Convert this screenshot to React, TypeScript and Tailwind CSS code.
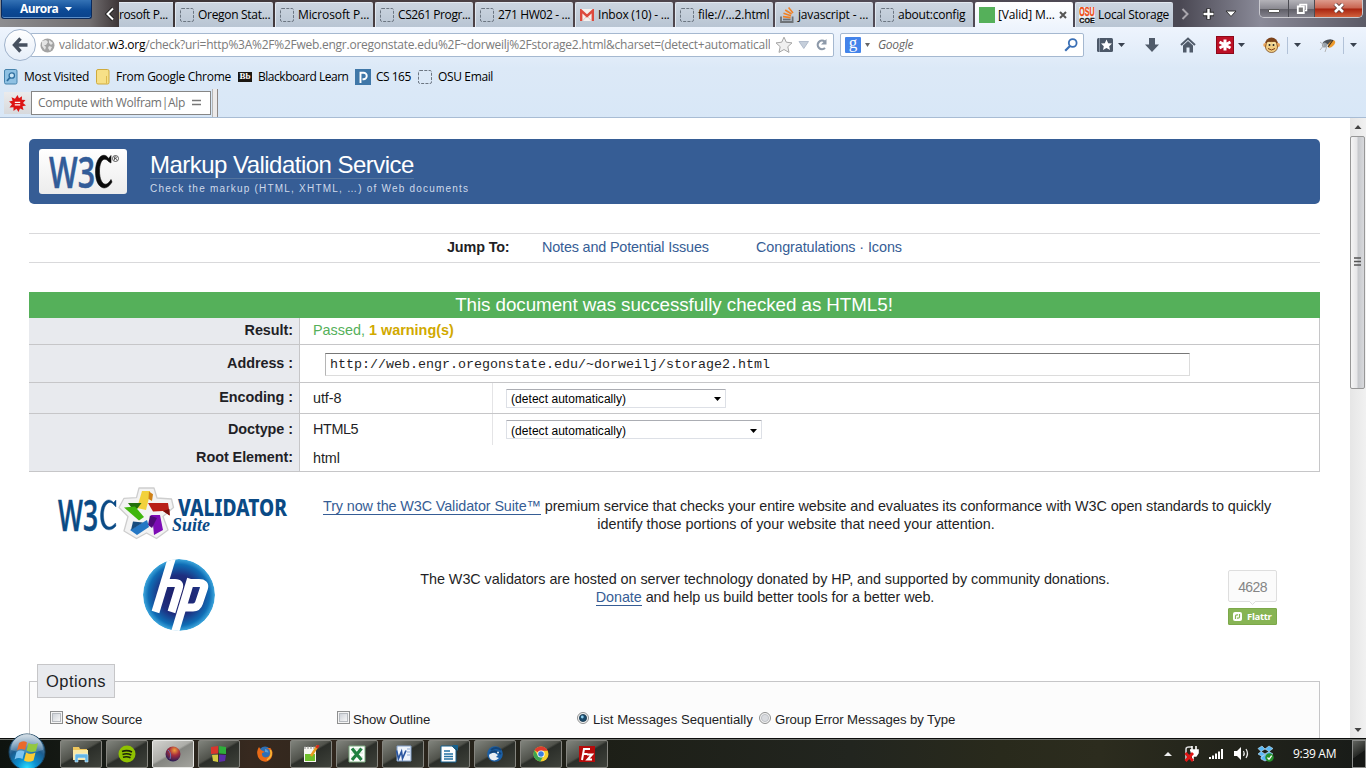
import React from "react";

type Kids = { children?: React.ReactNode };

const Dashed = () => (
  <svg width="14" height="14" viewBox="0 0 14 14" className="shrink-0">
    <rect x="0.5" y="0.5" width="13" height="13" rx="1.5" fill="none" stroke="#6c7682" strokeDasharray="3 1.3" />
  </svg>
);

const Gmail = () => (
  <svg width="14" height="12" viewBox="0 0 14 12" className="shrink-0">
    <rect width="14" height="12" rx="1" fill="#f4f0ee" />
    <path d="M1.2 12V1.6L7 7L12.8 1.6V12" fill="none" stroke="#dd4a3e" strokeWidth="2.4" />
    <path d="M2.5 12L6 8M11.5 12L8 8" stroke="#d9b8b4" strokeWidth=".7" />
  </svg>
);

const StackOverflow = () => (
  <svg width="14" height="16" viewBox="0 0 14 16" className="shrink-0">
    <path d="M1 9.5V15H12.6V9.5" fill="none" stroke="#6e7277" strokeWidth="1.8" />
    <path d="M3 12.5H10.6" stroke="#6e7277" strokeWidth="1.8" />
    <path d="M3 9.6L10.6 10.6M3.5 6.2L11 8.7M5.2 3L11.6 7M8.6 .6L13 6" stroke="#f08024" strokeWidth="1.6" />
  </svg>
);

const GreenSquare = () => <span className="h-4 w-4 shrink-0 bg-[#55b05a]" />;

const OsuCoe = () => (
  <svg width="16" height="16" viewBox="0 0 16 16" className="shrink-0">
    <rect width="16" height="16" fill="#e9eef4" />
    <text x="0.3" y="9.3" fontSize="12" fontWeight="700" fill="#f04a10" stroke="#f04a10" strokeWidth=".3" textLength="15.4" lengthAdjust="spacingAndGlyphs" fontFamily="Liberation Sans, sans-serif">OSU</text>
    <text x="0.3" y="15.8" fontSize="7.6" fontWeight="700" fill="#111" stroke="#111" strokeWidth=".3" textLength="15.4" lengthAdjust="spacingAndGlyphs" fontFamily="Liberation Sans, sans-serif">COE</text>
  </svg>
);

const Caret = ({ c = "#39424f", w = 7 }: { c?: string; w?: number }) => (
  <svg width={w} height="4" viewBox="0 0 8 4" preserveAspectRatio="none" className="shrink-0">
    <path d="M0 0H8L4 4Z" fill={c} />
  </svg>
);

const tabs: { icon: React.ReactNode; label: string; cls: string }[] = [
  { icon: <Dashed />, label: "Oregon Stat...", cls: "tracking-[-0.3px]" },
  { icon: <Dashed />, label: "Microsoft P...", cls: "tracking-[-0.1px]" },
  { icon: <Dashed />, label: "CS261 Progr...", cls: "tracking-[-0.42px]" },
  { icon: <Dashed />, label: "271 HW02 - ...", cls: "tracking-[-0.35px]" },
  { icon: <Gmail />, label: "Inbox (10) - ...", cls: "tracking-[-0.22px]" },
  { icon: <Dashed />, label: "file://...2.html", cls: "tracking-[-0.17px]" },
  { icon: <StackOverflow />, label: "javascript - ...", cls: "tracking-[-0.17px]" },
  { icon: <Dashed />, label: "about:config", cls: "tracking-[-0.22px]" },
];

const TabBar = () => (
  <div className="flex h-[27px] items-start bg-[linear-gradient(90deg,#8d8d90_0px,#716e70_90px,#3b3335_120px,#4c4145_500px,#514a55_900px,#4a4853_1180px,#8a8a98_1260px,#5b5a66_1366px)]">
    <div className="ml-px flex h-[19px] w-[91px] items-center rounded-b-[3px] border border-t-0 border-[#0a2a5c] bg-[linear-gradient(180deg,#3472b5,#0c4a96_55%,#0a428a)] pl-[18px] text-[12px] font-bold tracking-[-0.6px] text-white shadow-[inset_0_-1px_0_#5b8fca]">
      Aurora
      <span className="ml-[7px] flex"><Caret c="#fff" w={7} /></span>
    </div>
    <div className="flex h-[27px] w-[27px] shrink-0 items-center justify-center pl-2">
      <svg width="10" height="14" viewBox="0 0 10 14"><path d="M8 1.5L2.5 7L8 12.5" fill="none" stroke="#222" strokeWidth="4" /><path d="M8 1.5L2.5 7L8 12.5" fill="none" stroke="#fff" strokeWidth="2" /></svg>
    </div>
    <div className="mt-[2px] flex h-[25px] w-[54px] shrink-0 items-center border-t border-[#e2e8f0] bg-[linear-gradient(180deg,#ccd5e0,#b9c5d3)] text-[12px] tracking-[-0.4px] text-black">rosoft P...</div>
    {tabs.map((t) => (
      <div key={t.label} className="ml-[2px] mt-[2px] flex h-[25px] w-[98px] shrink-0 items-center gap-[4px] rounded-t-[2px] border-l border-t border-[#e2e8f0] bg-[linear-gradient(180deg,#ccd5e0,#b9c5d3)] pl-[4px] text-[12px] text-black">
        {t.icon}
        <span className={"whitespace-nowrap " + t.cls}>{t.label}</span>
      </div>
    ))}
    <div className="ml-[2px] mt-[2px] flex h-[25px] w-[98px] shrink-0 items-center rounded-t-[2px] bg-[linear-gradient(180deg,#ffffff,#eef4fd)] pl-[4px] text-[12px] text-black">
      <GreenSquare />
      <span className="ml-[3px] w-[61px] whitespace-nowrap tracking-[-0.15px]">[Valid] M...</span>
      <svg width="8" height="8" viewBox="0 0 8 8"><path d="M1 1L7 7M7 1L1 7" stroke="#555" strokeWidth="2" /></svg>
    </div>
    <div className="ml-[2px] mt-[2px] flex h-[25px] w-[98px] shrink-0 items-center gap-[3px] rounded-t-[2px] border-l border-t border-[#e2e8f0] bg-[linear-gradient(180deg,#ccd5e0,#b9c5d3)] pl-[3px] text-[12px] text-black">
      <OsuCoe />
      <span className="whitespace-nowrap tracking-[-0.3px]">Local Storage</span>
    </div>
    <svg width="72" height="27" viewBox="0 0 72 27" className="ml-[2px] shrink-0">
      <path d="M7.5 9L12.5 14L7.5 19" fill="none" stroke="#a9a6ad" strokeWidth="2" />
      <path d="M28 14H39M33.500 8.500V19.500" stroke="#222" strokeWidth="4.400" />
      <path d="M28.500 14H38.500M33.500 9V19" stroke="#fff" strokeWidth="2.400" />
      <path d="M51 11H61L56 16.500Z" fill="#fff" stroke="#333" />
    </svg>
    <div className="ml-[12px] flex h-[18px] w-[104px] shrink-0 overflow-hidden rounded-b-[5px] border border-t-0 border-[#c9c9cf]">
      <div className="flex w-[29px] items-center justify-center border-r border-[#4b4b52] bg-[linear-gradient(180deg,#b4b3b9,#8b8a92_50%,#5e5d66_52%,#83828c)]">
        <span className="mt-[4px] h-[4px] w-[12px] rounded-[1px] border border-[#555] bg-white" />
      </div>
      <div className="flex w-[26px] items-center justify-center border-r border-[#4b4b52] bg-[linear-gradient(180deg,#b4b3b9,#8b8a92_50%,#5e5d66_52%,#83828c)]">
        <svg width="12" height="12" viewBox="0 0 12 12"><path d="M4 3V1.500H10.500V7.500H9" fill="none" stroke="#fff" strokeWidth="1.500" /><path d="M1.800 3.500H7.800V10H1.800Z" fill="#777" stroke="#fff" strokeWidth="1.800" /></svg>
      </div>
      <div className="flex flex-1 items-center justify-center bg-[linear-gradient(180deg,#dd9b8c,#c8634f_48%,#a8230f_52%,#d0603c)]">
        <svg width="12" height="10" viewBox="0 0 12 10" className="-mt-[2px]"><path d="M2 1L10 9M10 1L2 9" stroke="#5a3330" strokeWidth="4.200" /><path d="M2 1L10 9M10 1L2 9" stroke="#fff" strokeWidth="2.600" /></svg>
      </div>
    </div>
  </div>
);

const NavBar = () => (
  <div className="flex h-[36px] items-center pl-[4px]">
    <div className="z-10 flex h-[32px] w-[32px] shrink-0 items-center justify-center rounded-full border border-[#9fb2cb] bg-[linear-gradient(180deg,#ffffff,#e6eef9)]">
      <svg width="16" height="16" viewBox="0 0 16 16"><path d="M8.500 1.500L2.500 8L8.500 14.500M2.500 8H15.500" fill="none" stroke="#46505f" strokeWidth="3.400" /></svg>
    </div>
    <div className="-ml-[6px] flex h-[24px] w-[804px] shrink-0 items-center rounded-[2px] border border-[#a5b8d0] bg-white pl-[9px]">
      <svg width="15" height="15" viewBox="0 0 15 15" className="shrink-0"><circle cx="7.500" cy="7.500" r="7" fill="#a3a3a3" /><path d="M2 3L6 2L8 4L6 7L4 7L6 9L5 12L2 8ZM9 2L13 5L11 7L9 5ZM9 8L12 9L10 13L8 10Z" fill="#e4e4e4" /></svg>
      <div className="ml-[4px] w-[712px] overflow-hidden whitespace-nowrap text-[12px] tracking-[-0.25px] text-[#7b7b7b]">
        validator.<span className="text-black">w3.org</span>/check?uri=http%3A%2F%2Fweb.engr.oregonstate.edu%2F~dorweilj%2Fstorage2.html&amp;charset=(detect+automatically)
      </div>
      <svg width="58" height="18" viewBox="0 0 58 18" className="ml-[5px] shrink-0">
        <path d="M9 1.200L11.300 6.200L17 6.900L12.800 10.700L14 16.400L9 13.500L4 16.400L5.200 10.700L1 6.900L6.700 6.200Z" fill="#f0f0f0" stroke="#a5a5a5" />
        <path d="M24 5.500H33.500L28.800 12.500Z" fill="#c6cfdb" stroke="#a7b3c4" strokeWidth=".8" />
        <path d="M49.800 5.600A4.300 4.300 0 1 0 50 12" fill="none" stroke="#8d99a9" strokeWidth="2.200" />
        <path d="M46 8.500L51.500 3V8.500Z" fill="#8d99a9" />
      </svg>
    </div>
    <div className="ml-[6px] flex h-[24px] w-[244px] shrink-0 items-center rounded-[2px] border border-[#a5b8d0] bg-white pl-[4px]">
      <span className="flex h-4 w-4 items-center justify-center rounded-[1px] bg-[#4484ea] font-['Liberation_Serif',serif] text-[17px] leading-none text-white"><span className="-mt-[5px]">g</span></span>
      <span className="ml-[4px]"><Caret c="#666" w={5} /></span>
      <span className="ml-[8px] flex-1 text-[12px] italic tracking-[-0.3px] text-[#666]">Google</span>
      <svg width="14" height="14" viewBox="0 0 14 14" className="mr-[5px]"><circle cx="8.700" cy="5" r="3.900" fill="none" stroke="#3a6fb5" strokeWidth="1.800" /><path d="M6 8L1.200 12.800" stroke="#3a6fb5" strokeWidth="2.200" /></svg>
    </div>
    <svg width="282" height="24" viewBox="0 0 282 24" className="shrink-0">
      <rect x="13" y="5" width="16" height="14" rx="1.500" fill="#4c5868" />
      <path d="M15.500 5V19" stroke="#8793a3" />
      <path d="M22.500 6.500L24.200 10.200L28 10.600L25.200 13.200L26 17L22.500 15L19 17L19.800 13.200L17 10.600L20.800 10.200Z" fill="#fff" />
      <path d="M34 10H41L37.500 14Z" fill="#39424f" />
      <path d="M65 5H71V11.500H75L68 19L61 11.500H65Z" fill="#505b6a" />
      <path d="M97 12L104 5.500L111 12" fill="none" stroke="#505b6a" strokeWidth="2" />
      <path d="M99 12.500L104 8L109 12.500V19.500H105.500V14.500H102.500V19.500H99Z" fill="#505b6a" />
      <rect x="132.500" y="3.500" width="17" height="17" fill="#bd1026" stroke="#8e0818" />
      <path d="M141 6.500V17.500M135.500 9L146.500 15M146.500 9L135.500 15" stroke="#fff" strokeWidth="3" />
      <path d="M154 10H161L157.500 14Z" fill="#39424f" />
      <ellipse cx="187.500" cy="11.500" rx="6.500" ry="7" fill="#7c431a" />
      <circle cx="181.200" cy="12" r="2" fill="#e9a45c" /><circle cx="194" cy="12" r="2" fill="#e9a45c" />
      <ellipse cx="187.500" cy="14" rx="6" ry="5.500" fill="#f1cd83" stroke="#6b3a12" strokeWidth=".7" />
      <circle cx="185" cy="11" r="2.300" fill="#f8e0a0" /><circle cx="190" cy="11" r="2.300" fill="#f8e0a0" />
      <circle cx="185.500" cy="12" r="1" fill="#222" /><circle cx="189.500" cy="12" r="1" fill="#222" />
      <path d="M184 15.500Q187.500 18.500 191 15.500" fill="none" stroke="#7d3a12" />
      <path d="M203.500 4V21M259.500 4V21" stroke="#b2c2d8" />
      <path d="M210 10H217L213.500 14ZM266 10H273L269.500 14Z" fill="#39424f" />
      <ellipse cx="244" cy="9" rx="5.500" ry="2.300" transform="rotate(-15 244 9)" fill="#4a4f55" />
      <ellipse cx="247.500" cy="11" rx="4.500" ry="2.400" transform="rotate(-45 247.500 11)" fill="#ec9a2c" />
      <path d="M244 14L249 7" stroke="#3b332a" strokeWidth="1.200" />
      <circle cx="240.500" cy="12" r="2.600" fill="#96a0aa" />
      <path d="M236 9L240 12L236 17M243 13L241 19" fill="none" stroke="#b5b5b5" />
    </svg>
  </div>
);

const Bookmarks = () => (
  <div className="flex h-[27px] items-center pl-[4px] text-[12px] text-black">
    <svg width="14" height="16" viewBox="0 0 14 16" className="shrink-0"><rect x=".5" y=".5" width="12.500" height="14.500" rx="1.500" fill="#8fc1e3" stroke="#4683ad" /><circle cx="7.800" cy="6.500" r="2.700" fill="#c9e5f6" stroke="#2d6d9e" strokeWidth="1.300" /><path d="M5.700 8.700L3 12" stroke="#2d6d9e" strokeWidth="1.800" /></svg>
    <span className="ml-[6px] w-[72px] whitespace-nowrap tracking-[-0.28px]">Most Visited</span>
    <svg width="14" height="16" viewBox="0 0 14 16" className="shrink-0"><rect x=".5" y=".5" width="12.500" height="14.500" rx="1.500" fill="#f7e087" stroke="#cfaa3c" /><path d="M10.500 7V14.500" stroke="#dcb94e" /></svg>
    <span className="ml-[6px] w-[122px] whitespace-nowrap tracking-[-0.28px]">From Google Chrome</span>
    <span className="flex h-[10px] w-[14px] shrink-0 items-center justify-center bg-[#1b1712] font-['Liberation_Serif',serif] text-[9px] font-bold leading-none text-white">Bb</span>
    <span className="ml-[6px] w-[97px] whitespace-nowrap tracking-[-0.47px]">Blackboard Learn</span>
    <svg width="16" height="16" viewBox="0 0 16 16" className="shrink-0"><rect width="16" height="16" fill="#3f77a8" /><path d="M5.500 14V3.800H8.500A3.200 3.200 0 0 1 8.500 10.300H7.500" fill="none" stroke="#fff" strokeWidth="1.900" /></svg>
    <span className="ml-[5px] w-[42px] whitespace-nowrap tracking-[-0.5px]">CS 165</span>
    <Dashed />
    <span className="ml-[6px] whitespace-nowrap tracking-[-0.36px]">OSU Email</span>
  </div>
);

const WolframBar = () => (
  <div className="flex h-[28px] border-b border-[#a8bcd4] pl-[4px]">
    <div className="mt-[2px] flex h-[22px] w-[27px] items-center justify-center bg-[linear-gradient(180deg,#ebebec,#d7d9dc)]">
      <svg width="17" height="17" viewBox="0 0 17 17"><path d="M8.500 0L10 3.200L13 1.200L12.800 4.800L16.500 5L14 8L17 10.500L13.500 11.300L14.500 15L11 13.500L9.500 17L7.500 13.700L4.500 16L4.500 12.300L.5 12.500L3 9.200L0 6.500L3.600 5.800L2.500 2.200L6 3.700Z" fill="#dd1414" /><path d="M5.800 7.300H11.200M5.800 9.800H11.200" stroke="#fff" strokeWidth="1.200" /></svg>
    </div>
    <div className="mt-px flex h-[24px] w-[180px] items-center border border-[#868686] bg-white pl-[6px] text-[12px] text-[#717171]">
      <span className="w-[154px] shrink-0 whitespace-nowrap tracking-[-0.31px]">Compute with Wolfram|Alp</span>
      <svg width="9" height="7" viewBox="0 0 9 7" className="-mt-[2px] shrink-0"><path d="M0 1.500H9M0 5.500H9" stroke="#777" strokeWidth="1.600" /></svg>
    </div>
    <div className="-mt-px ml-px h-[28px] w-[6px] border-l border-r border-[#8d8786] border-l-[#b5b5b5] bg-[#eceaea]" />
  </div>
);

const W3CHeader = () => (
  <div className="flex h-[65px] rounded-[5px] bg-[#365d95]">
    <div className="ml-[10px] mt-[10px] h-[45px] w-[88px] rounded-[3px] bg-[linear-gradient(180deg,#fff,#ececec)]">
      <svg width="88" height="45" viewBox="0 0 88 45">
        <text x="10" y="38.500" fontFamily="Open Sans, sans-serif" fontSize="44" fontWeight="600" fill="#325c98" stroke="#325c98" strokeWidth=".5" textLength="46" lengthAdjust="spacingAndGlyphs">W3</text>
        <path d="M72 6.500V14L69.500 12.500C65 7 60.500 12 60.500 22C60.500 34 66.500 40 72 30.500L73 33C66.500 44 56.500 39 56.500 23C56.500 8 65 2 69.500 9.500Z" fill="#0a0a0a" stroke="#0a0a0a" strokeWidth=".6" />
        <circle cx="76.500" cy="9.500" r="3" fill="none" stroke="#333" strokeWidth=".8" />
        <path d="M75.500 11.200V7.900H77Q78 8.700 77 9.500H75.500M76.800 9.500L77.800 11.200" fill="none" stroke="#333" strokeWidth=".7" />
      </svg>
    </div>
    <div className="ml-[23px] flex flex-col items-start">
      <div className="mt-[12px] h-[28px] whitespace-nowrap border-b border-[#53749f] text-[24px] leading-[28px] tracking-[-0.53px] text-white">Markup Validation Service</div>
      <div className="mt-[3px] whitespace-nowrap text-[10px] leading-[13px] tracking-[1.21px] text-[#cfdaea]">Check the markup (HTML, XHTML, …) of Web documents</div>
    </div>
  </div>
);

const Row = ({ label, h, children }: Kids & { label: string; h: string }) => (
  <div className={"flex " + h}>
    <div className="flex w-[271px] shrink-0 items-center justify-end border-r border-[#c6c6c8] bg-[#e8eaee] pr-[6px] font-bold tracking-[-0.05px]">{label}</div>
    <div className="flex flex-1 items-center">{children}</div>
  </div>
);

const Select = ({ w }: { w: string }) => (
  <div className={"ml-[13px] flex h-[19px] items-center justify-between rounded-[1px] border border-[#dde0e6] border-t-[#abadb3] bg-white pl-[4px] pr-[4px] pt-[2px] text-black " + w}>
    <span className="text-[12px] tracking-[0.05px]">(detect automatically)</span>
    <Caret c="#000" w={7} />
  </div>
);

const Results = () => (
  <div className="mt-[29px] border-b border-r border-[#c6c6c8] text-[14.4px]">
    <div className="-mr-px flex h-[26px] items-center justify-center bg-[#55b05a] pr-px text-[18.8px] text-white"><span className="whitespace-nowrap tracking-[-0.06px]">This document was successfully checked as HTML5!</span></div>
    <Row label="Result:" h="h-[27px] border-b border-[#c6c6c8] pb-0">
      <span className="ml-[13px] text-[#55b05a]">Passed, <b className="text-[#d1a900]">1 warning(s)</b></span>
    </Row>
    <Row label="Address :" h="h-[38px] border-b border-[#c6c6c8]">
      <div className="ml-[25px] mt-px flex h-[23px] w-[865px] items-center border border-[#dcdcdc] border-l-[#b5b5b5] border-t-[#777] pl-[4px] pt-[2px] font-['Liberation_Mono',monospace] text-[13.33px]">http://web.engr.oregonstate.edu/~dorweilj/storage2.html</div>
    </Row>
    <Row label="Encoding :" h="h-[31px] border-b border-[#c6c6c8]">
      <span className="flex h-full w-[193px] items-center border-r border-[#e4e4e6] pl-[13px] pt-px tracking-[-0.1px]">utf-8</span>
      <Select w="w-[220px]" />
    </Row>
    <Row label="Doctype :" h="h-[31px]">
      <span className="flex h-full w-[193px] items-center border-r border-[#e4e4e6] pl-[13px] tracking-[-0.4px]">HTML5</span>
      <Select w="w-[256px]" />
    </Row>
    <Row label="Root Element:" h="h-[26px]"><span className="ml-[13px] mt-px tracking-[-0.1px]">html</span></Row>
  </div>
);

const SuiteLogo = () => (
  <svg width="232" height="54" viewBox="0 0 232 54" className="shrink-0">
    <text x="1" y="43.500" fontFamily="Open Sans, sans-serif" fontSize="43" fontWeight="600" fill="#0a4a85" stroke="#0a4a85" strokeWidth=".5" textLength="40" lengthAdjust="spacingAndGlyphs">W3</text>
    <path d="M59 13V20L57 18C53 12 46.500 17 46.500 28C46.500 39 52 44 58.500 36L59 39C52 47 43.500 42 43.500 29C43.500 15 51 9 56.500 15.500Z" fill="#0a4a85" stroke="#0a4a85" strokeWidth=".4" />
    <path d="M82 1H97L100 11L114.500 12L116.500 20.500L106 29.500L111 43L99.500 51.500L89.500 46L79.500 51.500L67 44L71 29.500L62 20.500L67 11.300L79.500 10.700Z" fill="#f3f3f3" stroke="#cecece" strokeWidth="1.300" strokeLinejoin="round" />
    <path d="M85 4H93L92 11L89 23L80 21Z" fill="#f2d13c" /><path d="M92 4.500L96 7.300L95 14L91.500 12Z" fill="#cf8117" />
    <path d="M91 16H111L113 28.500L106 24L96 24.500Z" fill="#b91f18" /><path d="M106 24L112.500 22V28.500Z" fill="#7a100c" />
    <path d="M94 28H103L106 43L97 48L96 38Z" fill="#7d0cb5" /><path d="M93 28.500L100 31L95 41L91 38Z" fill="#4d0a78" />
    <path d="M73 43L90 33L92 40L80 48Z" fill="#2477c4" /><path d="M76 34.500L86 35.500L74 43Z" fill="#164b7e" />
    <path d="M71 16H84.500L80 22L74 20Z" fill="#236f0b" /><path d="M67 20.500L78 19.500L87 30L82 33.500Z" fill="#3fb60c" />
    <text x="121" y="29" fontFamily="Noto Sans, sans-serif" fontSize="23" fontWeight="800" fill="#0a4a85" textLength="109" lengthAdjust="spacingAndGlyphs">VALIDATOR</text>
    <text x="115" y="44" fontFamily="Liberation Serif, serif" fontSize="18" fontWeight="700" fontStyle="italic" fill="#0a4a85" textLength="38" lengthAdjust="spacingAndGlyphs">Suite</text>
  </svg>
);

const HpLogo = () => (
  <svg width="72" height="72" viewBox="0 0 72 72" className="shrink-0">
    <defs>
      <radialGradient id="hp" cx="50%" cy="50%" r="50%"><stop offset="0" stopColor="#1d1c63" /><stop offset=".55" stopColor="#1e2f80" /><stop offset=".85" stopColor="#0f6db5" /><stop offset="1" stopColor="#3fa9de" /></radialGradient>
      <clipPath id="hpc"><circle cx="36" cy="36" r="36" /></clipPath>
    </defs>
    <g clipPath="url(#hpc)">
      <circle cx="36" cy="36" r="36" fill="url(#hp)" />
      <g fill="none" stroke="#fff" strokeWidth="8">
        <path d="M29.500 -3L12.500 53" />
        <path d="M22 24H32Q37.500 24 35.800 29L28.500 53" />
        <path d="M48 20L31.500 75" />
        <path d="M46 24H56Q62.500 24 61 29L56 44Q54.500 48.500 50 48.500H38" />
      </g>
    </g>
  </svg>
);

const Sponsors = () => (
  <div className="text-[14.4px] leading-[18px]">
    <div className="flex pl-[28px] pt-[15px]">
      <SuiteLogo />
      <div className="ml-[30px] mt-[10px] w-[956px] text-center">
        <div className="whitespace-nowrap tracking-[-0.115px]"><span className="border-b border-[#365d95] text-[#365d95]">Try now the W3C Validator Suite™</span> premium service that checks your entire website and evaluates its conformance with W3C open standards to quickly</div>
        <div className="pr-[2px] tracking-[-0.04px]">identify those portions of your website that need your attention.</div>
      </div>
    </div>
    <div className="mt-[18px] flex pl-[114px]">
      <HpLogo />
      <div className="ml-[142px] mt-[11px] w-[816px] text-center tracking-[-0.07px]">
        <div>The W3C validators are hosted on server technology donated by HP, and supported by community donations.</div>
        <div><span className="border-b border-[#365d95] text-[#365d95]">Donate</span> and help us build better tools for a better web.</div>
      </div>
      <div className="ml-[55px] mt-[11px] w-[49px]">
        <div className="flex h-[32px] items-center justify-center rounded-[2px] border border-[#dedede] bg-[#fbfbfb] pt-px text-[14px] tracking-[-0.6px] text-[#858585]">4628</div>
        <svg width="49" height="6" viewBox="0 0 49 6" className="-mt-px block"><path d="M21 0L24.500 3.500L28 0" fill="#fbfbfb" stroke="#dedede" /></svg>
        <div className="mt-px flex h-[17px] items-center rounded-[1px] border border-[#7ca84a] bg-[#87b454] pl-[4px] font-['Open_Sans',sans-serif] text-[9.5px] font-bold text-white">
          <svg width="9" height="9" viewBox="0 0 9 9"><rect width="9" height="9" rx="2" fill="#fff" /><path d="M2.500 7V4Q2.500 2.800 4 2.800H5M4 6.200H5Q6.500 6.200 6.500 5V2" fill="none" stroke="#87b454" strokeWidth="1.200" /></svg>
          <span className="ml-[5px] tracking-[-0.3px]">Flattr</span>
        </div>
      </div>
    </div>
  </div>
);

const Check = () => <span className="mt-px flex h-[13px] w-[13px] shrink-0 items-center justify-center border border-[#8e8f8f] bg-[#f4f4f4]"><span className="h-[9px] w-[9px] border border-[#b6babf] bg-[linear-gradient(135deg,#cfd3d9,#f6f6f6)]" /></span>;

const Radio = ({ on }: { on?: boolean }) => (
  <svg width="12" height="12" viewBox="0 0 12 12" className="mt-[2px] shrink-0"><circle cx="6" cy="6" r="5.500" fill="#f4f4f4" stroke="#8e8f8f" /><circle cx="6" cy="6" r="3.600" fill={on ? "#1b4a6b" : "#d9dbdf"} stroke={on ? "#16384f" : "#b6babf"} strokeWidth=".8" />{on && <circle cx="5.300" cy="5" r="1.400" fill="#8fd0ef" />}</svg>
);

const Options = () => (
  <div className="mt-[33px] flex h-[80px] flex-col">
    <div className="flex h-[34px] shrink-0 items-end">
      <div className="h-[17px] w-[8px] border-l border-t border-[#c6c6c8] bg-[#fcfcfc]" />
      <div className="flex h-[34px] w-[78px] items-center justify-center border border-[#c6c6c8] bg-[#e8eaee] text-[16.5px] tracking-[0.45px]">Options</div>
      <div className="h-[17px] flex-1 border-r border-t border-[#c6c6c8] bg-[#fcfcfc]" />
    </div>
    <div className="flex h-[46px] shrink-0 items-start border-l border-r border-[#c6c6c8] bg-[#fcfcfc] pl-[20px] pt-[12px] text-[13.2px] leading-[20px]">
      <div className="flex w-[287px] gap-[2px] tracking-[-0.1px]"><Check /><span>Show Source</span></div>
      <div className="flex w-[240px] gap-[3px] tracking-[-0.1px]"><Check /><span>Show Outline</span></div>
      <Radio on />
      <span className="ml-[4px] w-[166px] whitespace-nowrap">List Messages Sequentially</span>
      <span className="mr-[3px] w-[13px]"><Radio /></span>
      <span className="whitespace-nowrap tracking-[-0.1px]">Group Error Messages by Type</span>
    </div>
  </div>
);

const Scrollbar = () => (
  <div className="flex w-[16px] shrink-0 flex-col items-center bg-[linear-gradient(90deg,#e6e6e6,#f1f1f1)]">
    <svg width="16" height="18" viewBox="0 0 16 18"><path d="M4.500 11L8 7L11.500 11Z" fill="#444" /></svg>
    <div className="mr-px flex h-[253px] w-[15px] items-center justify-center rounded-[2px] border border-[#979797] bg-[linear-gradient(90deg,#f5f5f5,#e6e6e8_45%,#c6c8cc_55%,#d8d9dc)]">
      <svg width="7" height="9" viewBox="0 0 7 9" className="-mt-[2px]"><path d="M0 1H7M0 4.500H7M0 8H7" stroke="#555" strokeWidth="1.300" /></svg>
    </div>
    <div className="flex-1" />
    <svg width="16" height="17" viewBox="0 0 16 17"><path d="M4.500 7L8 11L11.500 7Z" fill="#444" /></svg>
  </div>
);

const I = ({ children }: Kids) => <svg width="18" height="18" viewBox="0 0 18 18">{children}</svg>;

const apps: { k: string; bg: string; icon: React.ReactNode }[] = [
  { k: "explorer", bg: "n", icon: <I><path d="M1 2H7L8 4H15V15H1Z" fill="#eec65c" /><path d="M1 5H16V15H1Z" fill="#fae9a4" /><path d="M3 17V10Q3 9 4.500 9H14.500Q16 9 16 10V17H13V13H6V17Z" fill="#63b6e6" stroke="#d8f0fc" strokeWidth=".6" /></I> },
  { k: "spotify", bg: "n", icon: <I><circle cx="9" cy="9" r="8.500" fill="#8fc200" /><path d="M4 6.500Q9 4.500 14 7M4.500 9.500Q9 7.800 13.300 10M5 12.300Q9 11 12.500 12.800" fill="none" stroke="#1b2408" strokeWidth="1.600" /></I> },
  { k: "aurora", bg: "a", icon: <I><defs><radialGradient id="au" cx="60%" cy="25%" r="75%"><stop offset="0" stopColor="#f2a13a" /><stop offset=".45" stopColor="#a72d3c" /><stop offset="1" stopColor="#271c56" /></radialGradient></defs><circle cx="9" cy="9" r="7.500" fill="url(#au)" /><path d="M4 5Q8 8 6 14" fill="none" stroke="#6174b8" /></I> },
  { k: "squares", bg: "n", icon: <I><path d="M1 2L8 1V8.500L1 9Z" fill="#d8362d" /><path d="M9 1L16 2V9L9 8.500Z" fill="#2fae3b" /><path d="M2 10L8 9.500V17L3 16Z" fill="#d3ca41" /><path d="M9 9.500L16 10L15 16L9 17Z" fill="#5b2da8" /></I> },
  { k: "firefox", bg: "x", icon: <I><circle cx="9" cy="8" r="6.500" fill="#2d6fb6" /><path d="M9 3Q14 3 14 8Q14 12 9.500 12.500Q5.500 12 6 8L9 7L5 5L3 2Q0 6 2 12Q5 17.500 11 16.500Q17 14 16.500 7Q14 2 14 3Q13 3 9 3Z" fill="#e96a17" /><path d="M9 4Q12 4.500 12.500 7.500L9 7Z" fill="#5ba0d8" /><path d="M14.500 5Q17 11 11 15" fill="none" stroke="#f7bb38" strokeWidth="1.500" /></I> },
  { k: "notepad", bg: "n", icon: <I><rect x="2" y="2" width="12" height="15" fill="#f6f6f0" /><path d="M3 9H13V16H3Z" fill="#6fbf2d" /><path d="M3 1V4M6 1V4M9 1V4M12 1V4" stroke="#888" /><path d="M15.500 1L9 11" stroke="#e79b1f" strokeWidth="2.500" /><path d="M16.500 0L14.500 3" stroke="#d42a20" strokeWidth="2.500" /></I> },
  { k: "excel", bg: "n", icon: <I><path d="M1 1H17V17H1Z" fill="#fff" stroke="#7cac80" /><path d="M3 4H15M3 8H15M3 12H15" stroke="#cfe5d1" /><path d="M4 3.500L13.500 15M13.500 3.500L4 15" stroke="#218141" strokeWidth="3.200" /></I> },
  { k: "word", bg: "n", icon: <I><path d="M3 1H17V16H3Z" fill="#eef4fc" stroke="#82a1cc" /><path d="M13 4H16M13 7H16M13 10H16" stroke="#8aa8d5" /><path d="M2.500 5.500L4.500 13.500L7.500 6.500L8.500 13.500L12 5.500" fill="none" stroke="#2a559f" strokeWidth="1.700" /></I> },
  { k: "writer", bg: "n", icon: <I><path d="M1 1H12L16 5V17H1Z" fill="#fff" stroke="#15618f" /><path d="M12 0H18V6Z" fill="#15618f" /><path d="M4 6H10M4 9H13M4 11.500H13M4 14H13" stroke="#2573a4" strokeWidth="1.300" /></I> },
  { k: "thunderbird", bg: "n", icon: <I><circle cx="9" cy="9" r="7.800" fill="#1b5fa6" /><path d="M3 10Q5 7 9 8L12 10L10 12L13 13Q10 16.500 6 15Q3 13.500 3 10Z" fill="#e9eef4" /><path d="M4 8Q9 4 15 9M5 5Q10 1 15 5" fill="none" stroke="#134376" strokeWidth="2" /><circle cx="12" cy="7.500" r="1" fill="#e4edf5" /></I> },
  { k: "chrome", bg: "n", icon: <I><circle cx="9" cy="9" r="7.500" fill="#f7cf2e" /><path d="M9 9L2.500 5.200A7.500 7.500 0 0 1 15.800 5.800L9 5.800Z" fill="#de3b2e" /><path d="M2.500 5.200A7.500 7.500 0 0 0 8.400 16.500L11.500 10.500L6 10.800Z" fill="#3ea551" /><circle cx="9" cy="9" r="3.600" fill="#fff" /><circle cx="9" cy="9" r="2.800" fill="#3b7ee0" /></I> },
  { k: "filezilla", bg: "n", icon: <I><rect x="1" y="1" width="16" height="16" fill="#b60b0b" /><path d="M4 15L6 4H12M5 9H9.500M9 9.500H14L9.500 14.500H14" fill="none" stroke="#fff" strokeWidth="2" /></I> },
];

const bgs: Record<string, string> = {
  n: "border-[#85857f] bg-[linear-gradient(150deg,#81847d,#50524b_45%,#2b2e29_50%,#3f423b)]",
  a: "border-[#e6e6e3] bg-[linear-gradient(150deg,#d3d3d0,#adada8_45%,#858681_50%,#a3a39d)]",
  x: "border-transparent",
};

const Taskbar = () => (
  <div className="flex h-[30px] items-center border-t border-[#0b0c0b] bg-[linear-gradient(90deg,#0e130f_0px,#1c1f19_140px,#37291f_250px,#1d1f17_600px,#22251f_850px,#292a1c_1000px,#2c2c1e_1100px,#181b18_1366px)] shadow-[inset_0_1px_0_#6e716c]">
    <div className="relative h-[29px] w-[60px] shrink-0">
      <svg width="38" height="35" viewBox="0 0 38 35" className="absolute -top-[6px] left-[8px]">
        <defs>
          <radialGradient id="orb" cx="50%" cy="95%" r="90%"><stop offset="0" stopColor="#2fe0ff" /><stop offset=".3" stopColor="#0b8fd0" /><stop offset=".65" stopColor="#1c5c8e" /><stop offset="1" stopColor="#7f9fb8" /></radialGradient>
          <linearGradient id="gloss" x1="0" y1="0" x2="0" y2="1"><stop offset="0" stopColor="#fff" stopOpacity=".65" /><stop offset="1" stopColor="#fff" stopOpacity=".15" /></linearGradient>
        </defs>
        <circle cx="19" cy="19" r="18" fill="url(#orb)" stroke="#174260" />
        <path d="M3 17A16 16 0 0 1 35 17Q19 23 3 17Z" fill="url(#gloss)" />
        <path d="M11 10Q15 7 19 9.500L17 17Q13 15 9 17.500Z" fill="#ea6a2b" />
        <path d="M20.500 10Q25 12.500 30 10L28 18Q23 20 18.500 17.500Z" fill="#93c83e" />
        <path d="M8.500 19Q12 16.500 16.500 18.500L14.500 26Q10.500 24 6.500 26.500Z" fill="#7cc4f2" />
        <path d="M18 19.500Q22.500 22 27.500 19.500L25.500 27.500Q20.500 30 16 27.500Z" fill="#fbcb35" />
      </svg>
    </div>
    {apps.map((a) => (
      <div key={a.k} className={"mr-[4px] flex h-[28px] w-[42px] shrink-0 items-center justify-center rounded-[2px] border " + bgs[a.bg]}>{a.icon}</div>
    ))}
    <div className="flex-1" />
    <svg width="120" height="20" viewBox="0 0 120 20" className="shrink-0">
      <path d="M5 12L9 8L13 12Z" fill="#eee" />
      <path d="M27 16V5Q27 3 30 3H33" fill="none" stroke="#ddd" strokeWidth="1.500" />
      <path d="M33 2V6M37 2V6M31 6H39V9L37 12H34V17" fill="#fff" stroke="#fff" strokeWidth="1.600" />
      <path d="M26.500 9L34 17M34 9L26.500 17" stroke="#e01515" strokeWidth="2.800" />
      <path d="M51 15V13M54 15V11.500M57 15V9.500M60 15V7.500M63 15V5" stroke="#fff" strokeWidth="2" />
      <path d="M75 7H78L82 3V16L78 12H75Z" fill="#fff" />
      <path d="M84.500 7Q86 9.500 84.500 12M87 5Q90 9.500 87 14" fill="none" stroke="#eee" strokeWidth="1.200" />
      <path d="M99 4.500L103 2L106 5L102 7.500ZM106 5L110 2L114 4.500L110 7.500ZM99 10L102 7.500L106 10L103 12.500ZM106 10L110 7.500L114 10L110 12.500ZM102 13L106 10.800L110 13V15L106 17L102 15Z" fill="#5bb8f4" stroke="#c6e9fd" strokeWidth=".6" />
      <circle cx="110.500" cy="13.500" r="4.200" fill="#25912b" /><path d="M108.500 13.500L110 15.300L112.700 11.700" fill="none" stroke="#fff" strokeWidth="1.300" />
    </svg>
    <span className="ml-[14px] w-[59px] whitespace-nowrap text-[12px] tracking-[-0.3px] text-white">9:39 AM</span>
    <div className="h-[28px] w-[14px] border border-[#8a8b89] bg-[linear-gradient(145deg,#62645f,#272926_50%,#151715_52%)]" />
  </div>
);

export default function App() {
  return (
    <div className="flex h-[768px] w-[1366px] flex-col overflow-hidden bg-white font-['Open_Sans','Noto_Sans',sans-serif]">
      <TabBar />
      <div className="bg-[linear-gradient(180deg,#eef4fd,#dce9f7_45%,#d8e7f7)]">
        <NavBar />
        <Bookmarks />
        <WolframBar />
      </div>
      <div className="flex h-[620px] font-['Liberation_Sans',Arial,sans-serif] text-[#1f1f26]">
        <div className="ml-[29px] w-[1291px] shrink-0 overflow-hidden pt-[21px]">
          <W3CHeader />
          <div className="mt-[29px] flex h-[30px] items-center border-b border-t border-[#d9d9db] pl-[418px] text-[14.4px] text-[#365d95]">
            <b className="w-[95px] tracking-[-0.15px] text-[#1f1f26]">Jump To:</b>
            <span className="w-[214px] tracking-[-0.17px]">Notes and Potential Issues</span>
            <span className="tracking-[-0.09px]">Congratulations · Icons</span>
          </div>
          <Results />
          <Sponsors />
          <Options />
        </div>
        <div className="flex-1" />
        <Scrollbar />
      </div>
      <Taskbar />
    </div>
  );
}
